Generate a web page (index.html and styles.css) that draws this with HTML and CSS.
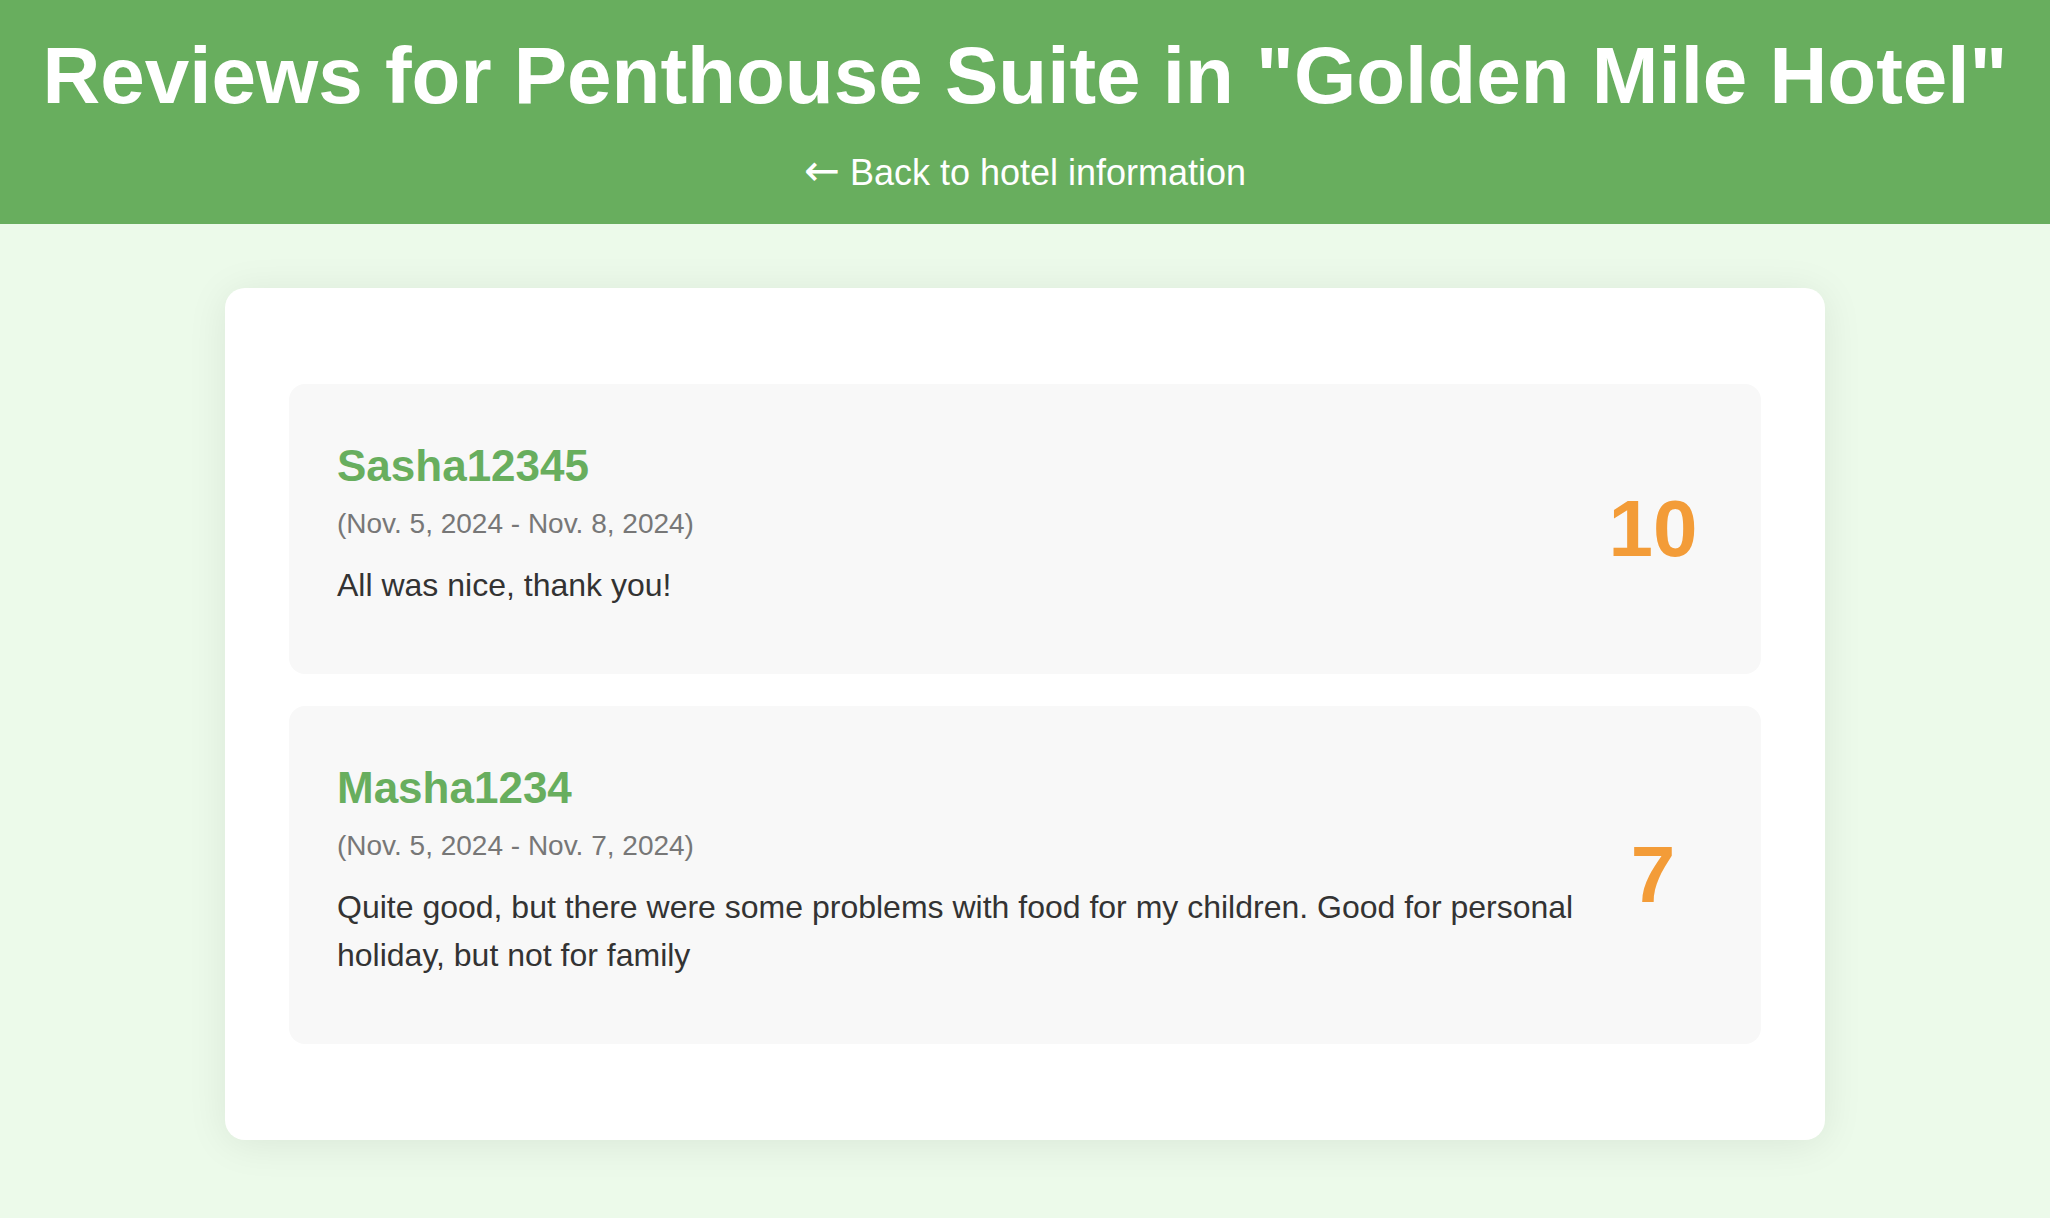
FILE: index.html
```html
<!DOCTYPE html>
<html lang="en">
<head>
<meta charset="utf-8">
<title>Reviews for Penthouse Suite</title>
<link rel="stylesheet" href="styles.css">
</head>
<body>
<header class="page-header">
  <h1 class="page-title">Reviews for Penthouse Suite in "Golden Mile Hotel"</h1>
  <p class="back-line"><a class="back-link" href="#"><span class="back-arrow">←</span> Back to hotel information</a></p>
</header>
<main class="reviews-panel">
  <div class="review-list">
    <article class="review-card">
      <div class="review-body">
        <h3 class="review-author">Sasha12345</h3>
        <p class="review-dates">(Nov. 5, 2024 - Nov. 8, 2024)</p>
        <p class="review-text">All was nice, thank you!</p>
      </div>
      <div class="review-score">10</div>
    </article>
    <article class="review-card">
      <div class="review-body">
        <h3 class="review-author">Masha1234</h3>
        <p class="review-dates">(Nov. 5, 2024 - Nov. 7, 2024)</p>
        <p class="review-text">Quite good, but there were some problems with food for my children. Good for personal holiday, but not for family</p>
      </div>
      <div class="review-score">7</div>
    </article>
  </div>
</main>
</body>
</html>
```
FILE: styles.css
```css
html, body {
  margin: 0;
  padding: 0;
}
body {
  background: #ecfaea;
  font-family: "Liberation Sans", Arial, Helvetica, sans-serif;
  font-size: 32px;
  line-height: 1.5;
  color: #333333;
  min-height: 1218px;
}
.page-header {
  background: #68ae5e;
  color: #ffffff;
  text-align: center;
  padding: 32px 0 24px;
}
.page-title {
  margin: 0 0 26px;
  font-size: 80px;
  line-height: 88px;
  font-weight: bold;
}
.back-line {
  margin: 0;
  font-size: 36px;
  line-height: 54px;
}
.back-link {
  color: #ffffff;
  text-decoration: none;
}
.back-arrow {
  font-family: "DejaVu Sans", sans-serif;
  font-size: 43px;
  line-height: 1;
}
.reviews-panel {
  display: block;
  width: 1600px;
  box-sizing: border-box;
  margin: 64px auto 64px;
  background: #ffffff;
  border-radius: 20px;
  padding: 96px 64px;
  box-shadow: 0 4px 40px rgba(0, 0, 0, 0.08);
}
.review-list {
  display: flex;
  flex-direction: column;
  gap: 32px;
}
.review-card {
  display: flex;
  align-items: center;
  background: #f8f8f8;
  border-radius: 16px;
  padding: 49px 48px 49px;
}
.review-body {
  flex: 1;
  min-width: 0;
}
.review-author {
  margin: 0 0 4px;
  font-size: 44px;
  line-height: 66px;
  font-weight: bold;
  color: #68ae5e;
}
.review-dates {
  margin: 0 0 16px;
  font-size: 28px;
  line-height: 42px;
  color: #777777;
}
.review-text {
  margin: 0 0 16px;
  font-size: 32px;
  line-height: 48px;
  color: #333333;
}
.review-score {
  flex: 0 0 120px;
  text-align: center;
  font-size: 80px;
  line-height: 1.2;
  font-weight: bold;
  color: #f39c38;
}
```
